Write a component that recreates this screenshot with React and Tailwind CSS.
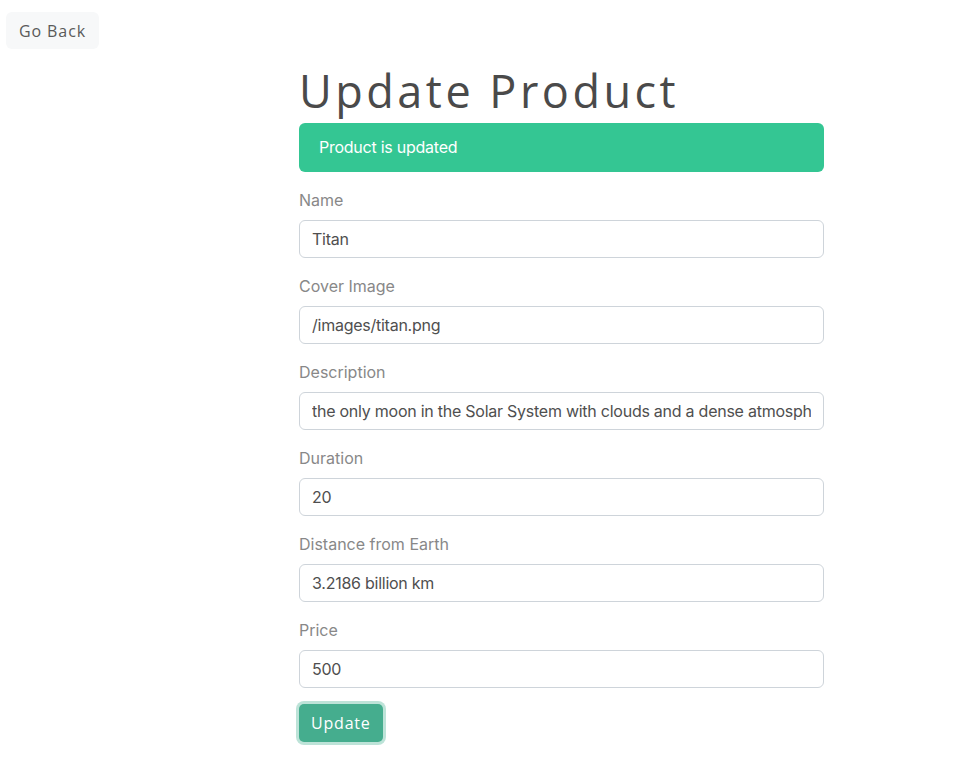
import { useState } from "react";

const fields = [
  { id: "name", label: "Name", value: "Titan" },
  { id: "image", label: "Cover Image", value: "/images/titan.png" },
  {
    id: "description",
    label: "Description",
    value:
      "the only moon in the Solar System with clouds and a dense atmosphere, mostly nitrogen",
  },
  { id: "duration", label: "Duration", value: "20" },
  { id: "distance", label: "Distance from Earth", value: "3.2186 billion km" },
  { id: "price", label: "Price", value: "500" },
];

function ProductForm() {
  const [values, setValues] = useState(
    Object.fromEntries(fields.map((f) => [f.id, f.value]))
  );

  return (
    <form onSubmit={(e) => e.preventDefault()}>
      {fields.map((f) => (
        <div key={f.id} className="mb-4">
          <label
            htmlFor={f.id}
            className="mb-2 block text-base leading-6 text-[#888888]"
          >
            {f.label}
          </label>
          <input
            id={f.id}
            type="text"
            value={values[f.id]}
            onChange={(e) => setValues({ ...values, [f.id]: e.target.value })}
            className="block h-[38px] w-full rounded-[6px] border border-[#ced4da] bg-white px-3 text-base tracking-[-0.25px] text-[#4f4f4f] outline-none"
          />
        </div>
      ))}
      <button
        type="submit"
        className="h-[38px] rounded-[5px] bg-[#45ad8e] px-3 text-base text-white shadow-[0_0_0_3px_#bde3d8] font-['Open_Sans',sans-serif] tracking-[0.8px]"
      >
        Update
      </button>
    </form>
  );
}

export default function App() {
  return (
    <div className="min-h-[777px] bg-white font-['Inter',sans-serif]">
      <div className="px-[6px] pt-3">
        <button className="h-[37px] rounded-[6px] bg-[#f7f8f9] px-[13px] text-base text-[#5a5a5a] font-['Open_Sans',sans-serif] tracking-[0.9px]">
          Go Back
        </button>
      </div>
      <div className="ml-[299px] w-[525px]">
        <h1 className="mt-[15px] mb-[5px] text-[45px] leading-[54px] text-[#4a4a4a] tracking-[3.5px] font-['Open_Sans',sans-serif]">
          Update Product
        </h1>
        <div className="mb-4 h-[49px] rounded-[6px] bg-[#34c693] px-5 py-3 text-base leading-6 tracking-[-0.25px] text-white">
          Product is updated
        </div>
        <ProductForm />
      </div>
    </div>
  );
}
